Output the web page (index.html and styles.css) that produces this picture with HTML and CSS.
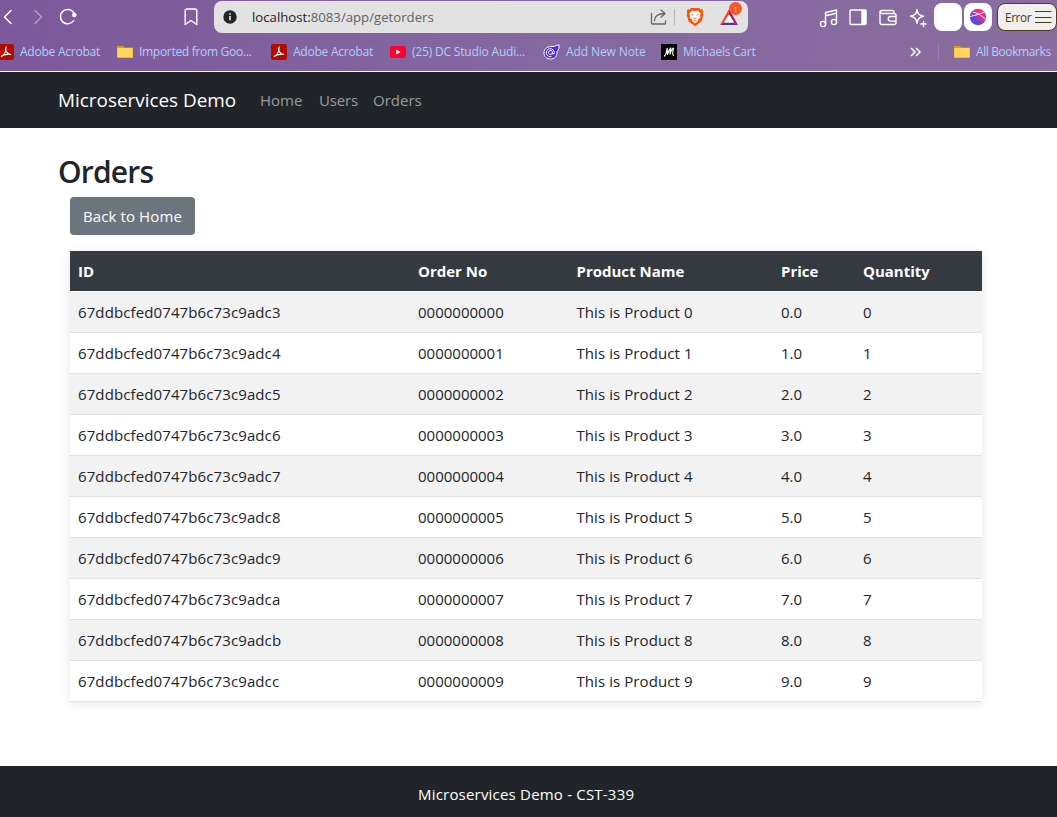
FILE: index.html
```html
<!DOCTYPE html>
<html lang="en">
<head>
<meta charset="utf-8">
<title>Orders</title>
<link rel="stylesheet" href="styles.css">
</head>
<body>
<header class="browser">
  <div class="toolbar">
    <svg class="nav-icons" width="80" height="34" viewBox="0 0 80 34" fill="none" stroke="#fff" stroke-width="1.500" stroke-linecap="round" stroke-linejoin="round">
      <path d="M11 10.500L4.500 17l6.500 6.500"/>
      <path d="M35 10.500l6.500 6.500-6.500 6.500" opacity=".4"/>
      <path d="M74 13.200A7.200 7.200 0 1 0 73.600 20.700"/>
      <circle cx="74.300" cy="15" r="1.500" fill="#fff"/>
    </svg>
    <svg class="mark" width="14" height="18" viewBox="0 0 14 18" fill="none" stroke="#fff" stroke-width="1.400" stroke-linejoin="round"><path d="M1.200 3Q1.200 1 3 1h8q1.800 0 1.800 2v13.500L7 12.500l-5.800 4z"/></svg>
    <div class="address">
      <svg width="14" height="14" viewBox="0 0 14 14"><circle cx="7" cy="7" r="6.700" fill="#222428"/><path d="M7 6v4.300M7 3.300v1.400" stroke="#e2e2e2" stroke-width="1.700"/></svg>
      <span class="url">localhost:<i>8083/app/getorders</i></span>
      <svg class="share" width="18" height="18" viewBox="0 0 18 18" fill="none" stroke="#666" stroke-width="1.300" stroke-linecap="round" stroke-linejoin="round"><path d="M1.500 5.500v9.500q0 1 1 1h12q1 0 1-1v-2M4.500 12.500C5 7.500 9 5.500 14.500 5.500M11 2l4 3.500-4 3.700"/></svg>
      <span class="divider"></span>
      <svg class="lion" width="18" height="20" viewBox="0 0 18 20"><path d="M5 1h8l1.500 1.500 1.800-.2.900 2.200-.5 1.500.5 2-1.900 6.500L9 19.300 2.700 14.500.8 8l.5-2-.5-1.500.9-2.200 1.800.2z" fill="#ff5000"/><path d="M6 3.500l3 .5 3-.5 2.800 3-.8 2 .3 2.200-2.500 2 .2 1.200L9 16.500l-3-2.600.2-1.200-2.500-2L4 8.500l-.8-2z" fill="#fff"/><path d="M5.500 7.300l2 .7M12.500 7.300l-2 .7M7.500 10.800L9 11.500l1.500-.7M7.500 13.800L9 13l1.500.8" fill="none" stroke="#ff5000" stroke-width=".8"/></svg>
      <span class="rewards">
        <svg width="20" height="18" viewBox="0 0 20 18"><path d="M10 1L1 17l4-2.500 5-8.200z" fill="#ff4724"/><path d="M10 1l9 16-4-2.500-5-8.200z" fill="#9e1f63"/><path d="M1 17h18l-4-2.500H5z" fill="#662d91"/><path d="M10 6.300l5 8.200H5z" fill="#fff"/></svg>
        <b class="badge">1</b>
      </span>
    </div>
    <svg class="tools" width="112" height="22" viewBox="0 0 112 22" fill="none" stroke="#fff" stroke-width="1.400" stroke-linecap="round" stroke-linejoin="round">
      <path d="M6.500 18V6.500L17.500 4v11.500M6.500 9.800l11-2.500"/><circle cx="4" cy="18" r="2.600"/><circle cx="15" cy="16" r="2.600"/>
      <rect x="31" y="4" width="16" height="14.500" rx="1"/><path d="M43 4.500h3.500v13.500H43z" fill="#fff"/>
      <path d="M75 7.500V6q0-1.500-1.500-1.500H63q-2 0-2 1.500 0 1.500 2 1.500h12q2 0 2 2v7q0 2-2 2H63q-2 0-2-2V6M77 10.500h-5.500q-2.300 0-2.300 2.300t2.300 2.300H77"/>
      <path d="M98 3.500c.7 4.500 2 6 6.500 6.800-4.500.9-5.800 2.400-6.500 6.900-.7-4.500-2-6-6.500-6.900 4.500-.8 5.800-2.300 6.500-6.800zM104.500 15.500v5M102 18h5"/>
    </svg>
    <div class="tile"></div>
    <div class="tile"><svg width="18" height="18" viewBox="0 0 18 18"><defs><linearGradient id="ball" x1="0" y1="1" x2="1" y2="0"><stop stop-color="#2355ef"/><stop offset=".45" stop-color="#8740c8"/><stop offset=".62" stop-color="#ee2e83"/><stop offset="1" stop-color="#f53c7b"/></linearGradient></defs><circle cx="9" cy="9" r="8.200" fill="url(#ball)"/><path d="M1 8.500Q9 7 15.500 4M4 4.200Q9 4.800 16.500 11" fill="none" stroke="#fff" stroke-width=".9"/></svg></div>
    <div class="error"><span>Error</span><svg width="17" height="14" viewBox="0 0 17 14"><path d="M0 1.500h16.500M0 7.500h16.500M0 12.500h16.500" stroke="#4a3c16" stroke-width="1.200"/></svg></div>
  </div>
  <div class="bookmarks">
    <svg class="bi pdf0" width="16" height="16" viewBox="0 0 16 16"><rect width="16" height="16" rx="2" fill="#b30b00"/><path d="M3 12.500c3-1 5-5 5-9-1.500 2 1 7 5 7-3-1-8 .5-10 2z" fill="none" stroke="#fff" stroke-width="1.200"/></svg>
    <span class="bm b1">Adobe Acrobat</span>
    <svg class="bi" width="16" height="14" viewBox="0 0 16 14"><path d="M0 1h6l1.500 1.500H16V13H0z" fill="#d99b20"/><rect x=".3" y="3" width="15.400" height="9.500" rx="1" fill="#ffd65a"/></svg>
    <span class="bm b2">Imported from Goo...</span>
    <svg class="bi" width="16" height="16" viewBox="0 0 16 16"><rect width="16" height="16" rx="2" fill="#b30b00"/><path d="M3 12.500c3-1 5-5 5-9-1.500 2 1 7 5 7-3-1-8 .5-10 2z" fill="none" stroke="#fff" stroke-width="1.200"/></svg>
    <span class="bm b3">Adobe Acrobat</span>
    <svg class="bi" width="16" height="12" viewBox="0 0 16 12"><rect width="16" height="12" rx="2.500" fill="#ff0033"/><path d="M6.200 3.500L10.500 6l-4.300 2.500z" fill="#fff"/></svg>
    <span class="bm b4">(25) DC Studio Audi...</span>
    <svg class="bi" width="17" height="16" viewBox="0 0 17 16"><path d="M1 9C1 4 5 2.500 9 2.500 12 2.500 14 1 16 .8c.5 3-.6 5.200-2 6.700C14.500 12 11.500 15 7.500 15 4 15 1 12.500 1 9z" fill="#512bd4" stroke="#fff" stroke-width="1"/><path d="M9.500 8.700a2 2 0 1 1-.2-1.200v2.400q1.800.9 2-1.200A4 4 0 1 0 8.500 12.500" fill="none" stroke="#fff" stroke-width="1"/></svg>
    <span class="bm b5">Add New Note</span>
    <svg class="bi" width="16" height="16" viewBox="0 0 16 16"><rect width="16" height="16" fill="#000"/><path d="M3.500 12Q5.500 10 6 4.500Q6.300 4 6.500 10.500Q8.500 4.500 9.700 4Q8.800 8 9 10Q11 4 12.500 4Q11 11 12.500 11.500" fill="none" stroke="#fff" stroke-width="1.200" stroke-linejoin="round" stroke-linecap="round"/></svg>
    <span class="bm b6">Michaels Cart</span>
    <svg class="more" width="11" height="10" viewBox="0 0 11 10" fill="none" stroke="#fff" stroke-width="1.500"><path d="M1 1l4 4-4 4M6 1l4 4-4 4"/></svg>
    <span class="split"></span>
    <svg class="bi" width="16" height="14" viewBox="0 0 16 14"><path d="M0 1h6l1.500 1.500H16V13H0z" fill="#d99b20"/><rect x=".3" y="3" width="15.400" height="9.500" rx="1" fill="#ffd65a"/></svg>
    <span class="bm b7">All Bookmarks</span>
  </div>
</header>
<nav class="navbar">
  <span class="brand">Microservices Demo</span>
  <span class="link home">Home</span>
  <span class="link users">Users</span>
  <span class="link">Orders</span>
</nav>
<main class="content">
  <h2 class="title">Orders</h2>
  <div class="inner">
    <button class="back">Back to Home</button>
    <table class="orders">
      <colgroup><col class="c1"><col class="c2"><col class="c3"><col class="c4"><col></colgroup>
      <thead><tr><th>ID</th><th>Order No</th><th>Product Name</th><th>Price</th><th>Quantity</th></tr></thead>
      <tbody>
        <tr><td>67ddbcfed0747b6c73c9adc3</td><td>0000000000</td><td>This is Product 0</td><td>0.0</td><td>0</td></tr>
        <tr><td>67ddbcfed0747b6c73c9adc4</td><td>0000000001</td><td>This is Product 1</td><td>1.0</td><td>1</td></tr>
        <tr><td>67ddbcfed0747b6c73c9adc5</td><td>0000000002</td><td>This is Product 2</td><td>2.0</td><td>2</td></tr>
        <tr><td>67ddbcfed0747b6c73c9adc6</td><td>0000000003</td><td>This is Product 3</td><td>3.0</td><td>3</td></tr>
        <tr><td>67ddbcfed0747b6c73c9adc7</td><td>0000000004</td><td>This is Product 4</td><td>4.0</td><td>4</td></tr>
        <tr><td>67ddbcfed0747b6c73c9adc8</td><td>0000000005</td><td>This is Product 5</td><td>5.0</td><td>5</td></tr>
        <tr><td>67ddbcfed0747b6c73c9adc9</td><td>0000000006</td><td>This is Product 6</td><td>6.0</td><td>6</td></tr>
        <tr><td>67ddbcfed0747b6c73c9adca</td><td>0000000007</td><td>This is Product 7</td><td>7.0</td><td>7</td></tr>
        <tr><td>67ddbcfed0747b6c73c9adcb</td><td>0000000008</td><td>This is Product 8</td><td>8.0</td><td>8</td></tr>
        <tr><td>67ddbcfed0747b6c73c9adcc</td><td>0000000009</td><td>This is Product 9</td><td>9.0</td><td>9</td></tr>
      </tbody>
    </table>
  </div>
</main>
<footer class="footer"><span>Microservices Demo - CST-339</span></footer>
</body>
</html>
```
FILE: styles.css
```css
* { box-sizing: border-box; }
body { margin: 0; width: 1057px; height: 817px; overflow: hidden; display: flex; flex-direction: column; background: #fff; color: #212529; font-family: "Open Sans", "Noto Sans", sans-serif; font-size: 15px; line-height: 24px; }
svg { display: block; flex: none; }
span { white-space: nowrap; flex: none; }

.browser { height: 72px; flex: none; border-bottom: 1px solid #fff; background: linear-gradient(100deg, #7d589c, #8468a0 50%, #896d9f); }
.toolbar { height: 34px; display: flex; align-items: center; }
.mark { margin-left: 104px; }
.address { width: 534px; height: 32px; margin-left: 16px; border-radius: 8px; background: #e2e2e2; display: flex; align-items: center; padding-left: 9px; flex: none; }
.url { margin-left: 15px; width: 398px; font-size: 13.2px; color: #202124; }
.url i { font-style: normal; color: #5f6165; }
.divider { width: 1px; height: 16px; margin: 0 11px 0 6px; background: #b4b4b8; }
.rewards { position: relative; margin-left: 15px; }
.badge { position: absolute; left: 10px; top: -6px; width: 13px; height: 13px; border-radius: 7px; background: #fb542b; color: #fff; font-size: 8px; line-height: 13px; font-weight: 400; text-align: center; }
.tools { margin-left: 71px; }
.tile { width: 28px; height: 28px; margin-left: 3px; border-radius: 8px; background: #fff; display: grid; place-items: center; flex: none; }
.tile + .tile { margin-left: 2px; }
.error { width: 60px; height: 28px; margin-left: 5px; border: 1px solid #4a3c16; border-radius: 8px; background: #f1efed; color: #4a3c16; font-size: 11.8px; letter-spacing: -.4px; display: flex; align-items: center; padding-left: 7px; flex: none; }
.error span { width: 30px; }

.bookmarks { height: 36px; display: flex; align-items: center; color: #b3cdfb; font-size: 12px; letter-spacing: -.24px; }
.pdf0 { margin-left: -2px; }
.bm { margin-left: 6px; }
.b1 { width: 97px; }
.b2 { width: 132px; letter-spacing: -.3px; }
.b3 { width: 97px; }
.b4 { width: 131px; letter-spacing: -.18px; }
.b5 { width: 95px; letter-spacing: -.1px; }
.b6 { width: 227px; }
.split { width: 1px; height: 16px; margin: 0 15px 0 17px; background: #9f7fba; }
.b7 { letter-spacing: -.4px; }

.navbar { height: 56px; flex: none; background: #212529; display: flex; align-items: center; padding-left: 58px; color: #999b9d; }
.brand { width: 202px; font-size: 18.900px; color: #fff; }
.home { width: 59px; }
.users { width: 54px; letter-spacing: -.15px; }

.content { flex: 1; padding: 25px 75px 0 58px; }
.title { margin: 0 0 6px; font-size: 30px; font-weight: 600; line-height: 38px; letter-spacing: -.8px; }
.inner { padding-left: 12px; }
.back { display: block; height: 38px; width: 125px; padding: 0; border: 0; border-radius: 4px; background: #6c757d; color: #fff; font: inherit; letter-spacing: .1px; }
.orders { width: 912px; margin-top: 16px; table-layout: fixed; border-collapse: separate; border-spacing: 0; box-shadow: 0 2px 10px rgba(0, 0, 0, .1); }
.orders th { height: 41px; padding: 0 8px; text-align: left; font-weight: 700; color: #fff; background: #343a40; background-clip: padding-box; border-bottom: 1px solid #fff; }
.orders td { height: 41px; padding: 0 8px; border-bottom: 1px solid #dee2e6; background: #fff; }
.orders td:first-child { letter-spacing: .11px; }
.orders td:nth-child(3) { letter-spacing: .08px; }
.orders tbody tr:nth-child(odd) td { background: #f2f2f2; }
.c1 { width: 340px; }
.c2 { width: 158.500px; }
.c3 { width: 204.500px; }
.c4 { width: 82px; }

.footer { height: 51px; flex: none; background: #212529; color: #fff; padding: 16px 0 0 418px; letter-spacing: .2px; }
```
